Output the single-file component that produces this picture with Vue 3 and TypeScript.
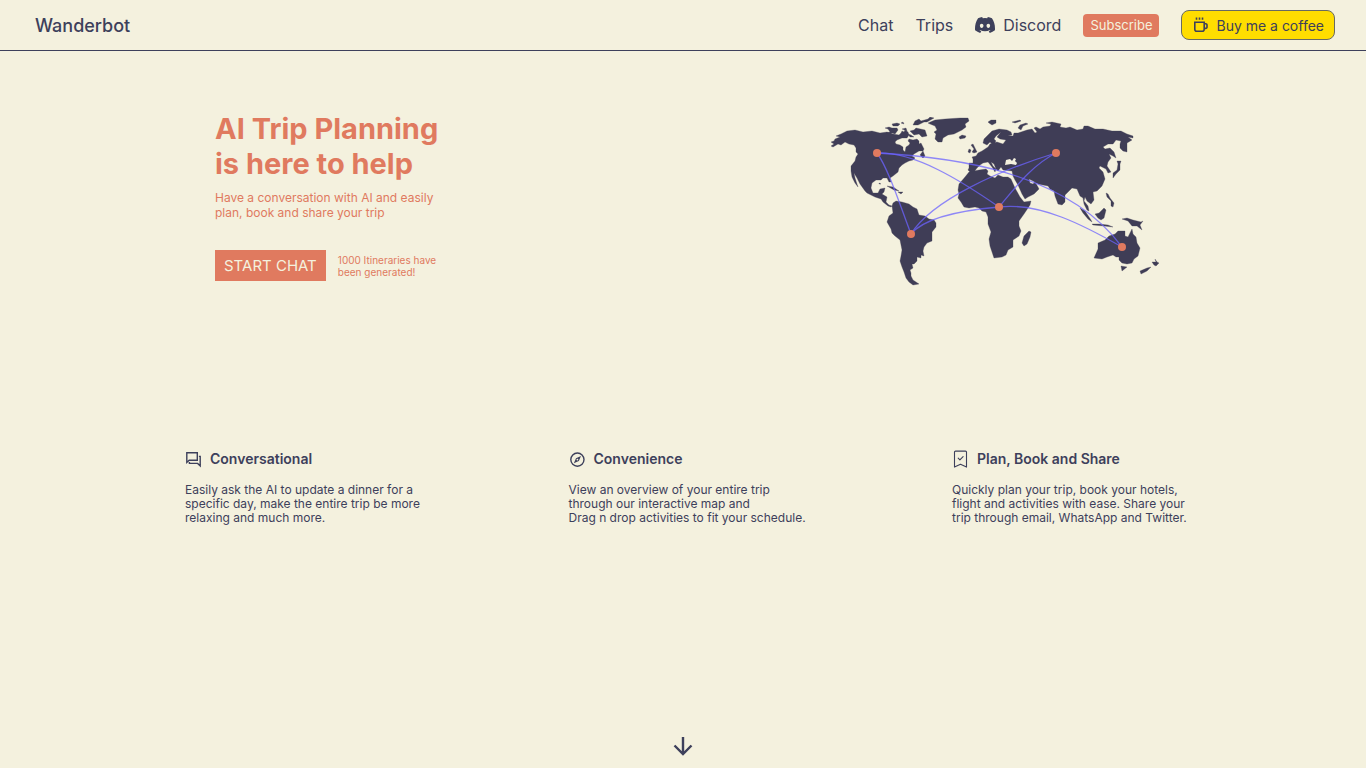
<script setup lang="ts">
interface Feature {
  icon: 'chat' | 'compass' | 'bookmark'
  title: string
  lines: string[]
}

const features: Feature[] = [
  {
    icon: 'chat',
    title: 'Conversational',
    lines: ['Easily ask the AI to update a dinner for a', 'specific day, make the entire trip be more', 'relaxing and much more.'],
  },
  {
    icon: 'compass',
    title: 'Convenience',
    lines: ['View an overview of your entire trip', 'through our interactive map and', 'Drag n drop activities to fit your schedule.'],
  },
  {
    icon: 'bookmark',
    title: 'Plan, Book and Share',
    lines: ['Quickly plan your trip, book your hotels,', 'flight and activities with ease. Share your', 'trip through email, WhatsApp and Twitter.'],
  },
]

const land: string[] = [
  // North and Central America
  'M831 146L834 144L831 142L834 141L835 139L840 137L836 136L841 134L847 131L855 130L863 132L872 131L880 133L887 132L893 134L899 135L901 133L902 131L904 132L905 130L908 132L909 135L907 138L902 138L897 140L895 142L896 144L900 145L903 147L903 150L905 152L906 147L909 145L910 143L908 141L909 139L913 140L917 139L919 141L919 144L921 143L924 149L923 151L919 151L914 154L912 156L915 158L913 160L909 161L905 163L902 165L899 168L898 172L893 176L890 178L891 182L889 182L887 178L883 178L881 180L876 180L872 183L871 188L873 193L878 193L880 189L885 188L884 192L882 194L887 197L886 202L889 205L892 206L891 207L888 206L883 202L881 199L875 197L867 193L865 191L860 184L857 178L854 173L855 178L858 187L855 183L852 177L851 171L851 166L855 161L856 157L858 154L856 152L856 148L854 145L849 144L845 142L841 145L838 144L833 147Z',
  // Arctic islands and Newfoundland
  'M889 135L886 133L890 132L888 129L885 128L889 127L892 128L897 128L898 130L895 134L892 133ZM892 124L897 123L900 124L898 126L893 126ZM901 123L903 122L904 124ZM902 129L906 128L907 131ZM915 121L919 119L921 121L928 119L930 117L934 118L927 122L924 122L918 125L913 125ZM910 131L914 130L916 128L925 130L927 136L922 137L919 134L914 135ZM908 134L911 135L914 137L910 137ZM920 155L923 151L925 156L923 158Z',
  // Caribbean
  'M887 186L893 187L899 191L894 190ZM898 192L903 192L901 194ZM879 183L881 184L879 184Z',
  // Greenland and Iceland
  'M928 123L935 120L945 119L960 118L968 118L969 121L965 124L966 127L962 130L954 134L948 135L943 138L942 142L938 142L935 139L936 134L934 132L937 130L935 126L930 124ZM959 137L962 135L966 136L965 138L960 139Z',
  // South America
  'M892 206L893 203L896 201L902 202L909 204L913 207L917 209L919 215L925 216L929 219L934 220L936 223L936 227L932 232L932 241L927 243L924 247L923 251L924 256L921 255L921 258L917 257L917 261L914 264L912 264L913 268L910 270L911 273L911 276L913 280L919 284L913 285L909 282L906 278L904 272L902 267L900 261L901 256L902 250L900 240L895 236L892 233L891 229L887 222L889 216L893 213Z',
  // Africa and Madagascar
  'M969 172L979 170L986 169L988 171L987 174L990 176L995 178L998 175L1003 177L1008 177L1011 179L1015 188L1020 197L1024 202L1031 201L1030 205L1024 214L1019 221L1019 226L1021 231L1019 236L1013 240L1013 247L1008 250L1006 255L1002 257L994 258L992 252L990 246L989 239L991 232L988 224L988 217L986 212L982 211L979 208L975 207L969 208L964 207L961 202L958 198L959 194L958 190L959 184L965 177Z',
  'M1029 231L1031 232L1030 237L1027 244L1024 246L1022 243L1024 236Z',
  // Eurasia
  'M968 170L969 168L969 163L973 163L973 159L972 157L976 156L978 153L982 151L988 147L990 144L993 143L997 142L1003 144L1006 140L1000 139L997 137L1001 132L996 136L994 139L996 141L993 145L990 142L987 145L983 143L984 139L988 135L992 131L999 129L1007 130L1011 132L1012 135L1008 136L1013 136L1014 133L1018 133L1027 130L1032 129L1035 133L1037 132L1034 128L1036 127L1040 129L1043 127L1050 126L1051 124L1046 123L1052 122L1061 124L1060 127L1066 128L1070 127L1077 130L1083 129L1084 126L1088 126L1095 129L1103 129L1112 131L1121 131L1127 134L1133 136L1133 138L1128 137L1132 140L1127 143L1127 148L1127 152L1123 151L1120 148L1120 144L1121 141L1116 140L1113 144L1108 144L1103 147L1105 149L1110 148L1114 152L1116 158L1113 156L1109 154L1111 158L1108 162L1107 166L1111 172L1108 173L1106 169L1100 166L1099 168L1103 172L1105 179L1102 186L1097 191L1093 192L1094 200L1091 204L1087 201L1085 197L1084 201L1088 206L1089 211L1087 210L1084 204L1083 198L1080 196L1077 189L1072 188L1065 195L1065 202L1062 205L1058 204L1055 196L1054 191L1050 189L1048 186L1038 184L1033 181L1029 179L1030 183L1033 184L1035 182L1038 187L1039 189L1034 194L1028 197L1025 199L1022 194L1018 185L1015 180L1013 176L1012 171L1003 170L1001 167L998 171L996 169L994 164L991 162L993 166L996 169L995 172L992 167L988 162L983 163L980 165L977 168L974 172L970 172Z',
  // British Isles, Svalbard and northern islands
  'M970 153L968 152L969 149L971 150ZM971 145L973 144L975 148L977 152L974 153L972 152L974 149ZM988 122L991 120L996 120L996 123L992 125L989 123ZM1012 122L1020 120L1021 121L1015 123ZM1018 128L1020 125L1026 123L1028 124L1023 126L1021 130Z',
  // Japan, Taiwan and Philippines
  'M1117 161L1121 161L1120 164L1120 170L1116 174L1113 178L1113 173L1117 170L1118 164ZM1106 193L1108 194L1110 198L1114 203L1113 207L1111 206L1111 201L1107 197Z',
  // Indonesia and New Guinea
  'M1080 208L1085 211L1091 220L1092 222L1088 219L1083 213ZM1095 214L1099 213L1104 208L1106 210L1104 218L1101 220L1098 218ZM1092 224L1099 224L1108 225L1113 227L1104 226L1093 225ZM1122 219L1127 218L1133 220L1141 222L1143 221L1140 225L1142 230L1137 226L1132 226L1128 221Z',
  // Australia, Tasmania and New Zealand
  'M1094 258L1098 249L1098 243L1105 240L1109 236L1115 234L1118 231L1125 231L1125 236L1128 237L1132 229L1133 234L1136 237L1137 243L1140 248L1138 256L1134 259L1132 263L1127 264L1122 263L1119 260L1119 257L1116 257L1113 255L1107 257L1102 259ZM1121 266L1127 267L1122 271ZM1140 271L1147 268L1151 267L1147 271L1141 274ZM1152 262L1156 262L1155 259L1157 262L1159 263L1156 266L1154 265Z',
]

// Black Sea
const water: string[] = [
  'M1005 165L1006 160L1010 159L1012 161L1014 158L1016 159L1015 161L1017 163L1016 165L1011 164Z',
]

const routes: string[] = [
  'M877 153C888 168 900 205 911 234',
  'M877 153C915 152 960 180 999 207',
  'M877 153C950 157 1065 170 1122 247',
  'M911 234C932 200 1000 170 1056 153',
  'M911 234C925 217 965 210 999 207',
  'M999 207C1015 188 1032 165 1056 153',
  'M999 207C1040 202 1085 226 1122 247',
]

const stops: [number, number][] = [[877, 153], [911, 234], [999, 207], [1056, 153], [1122, 247]]
</script>

<template>
  <div class="page">
    <header class="bar">
      <a class="brand" href="#">Wanderbot</a>
      <nav class="nav">
        <a href="#chat">Chat</a>
        <a href="#trips">Trips</a>
        <a class="discord" href="#discord">
          <svg width="20" height="16" viewBox="0 0 127.14 96.36" preserveAspectRatio="none" fill="currentColor" aria-hidden="true">
            <path d="M107.7 8.07A105.15 105.15 0 0 0 81.47 0a72.06 72.06 0 0 0-3.36 6.83 97.68 97.68 0 0 0-29.11 0A72.37 72.37 0 0 0 45.64 0a105.89 105.89 0 0 0-26.25 8.09C2.79 32.65-1.71 56.6.54 80.21a105.73 105.73 0 0 0 32.17 16.15 77.7 77.7 0 0 0 6.89-11.11 68.42 68.42 0 0 1-10.85-5.18c.91-.66 1.8-1.34 2.66-2a75.57 75.57 0 0 0 64.32 0c.87.71 1.76 1.39 2.66 2a68.68 68.68 0 0 1-10.87 5.19 77 77 0 0 0 6.89 11.1 105.25 105.25 0 0 0 32.19-16.14c2.64-27.38-4.51-51.11-18.9-72.15ZM42.45 65.69C36.18 65.69 31 60 31 53s5-12.74 11.43-12.74S54 46 53.89 53s-5.05 12.69-11.44 12.69Zm42.24 0C78.41 65.69 73.25 60 73.25 53s5-12.74 11.44-12.74S96.23 46 96.12 53s-5.04 12.69-11.43 12.69Z" />
          </svg>
          Discord
        </a>
        <button class="subscribe" type="button">Subscribe</button>
        <a class="coffee" href="#coffee">
          <svg width="18" height="18" viewBox="0 0 18 18" fill="none" stroke="currentColor" stroke-width="1.6" aria-hidden="true">
            <path d="M2.8 6.3h9.4v7a2 2 0 0 1-2 2H4.8a2 2 0 0 1-2-2ZM12.2 7.8h1.6a1.2 1.2 0 0 1 1.2 1.2v2.2a1.2 1.2 0 0 1-1.2 1.2h-1.6M4.5 1.6v2.2M7.5 1.6v2.2M10.5 1.6v2.2" />
          </svg>
          Buy me a coffee
        </a>
      </nav>
    </header>

    <main class="content">
      <section class="hero">
        <div class="pitch">
          <h1>AI Trip Planning<br />is here to help</h1>
          <p class="lead">Have a conversation with AI and easily<br />plan, book and share your trip</p>
          <div class="action">
            <button class="start" type="button">START CHAT</button>
            <p>1000 Itineraries have<br />been generated!</p>
          </div>
        </div>
        <svg class="map" width="330" height="170" viewBox="830 117 330 170" role="img" aria-label="World map with travel routes">
          <path v-for="d in land" :key="d" class="land" :d="d" />
          <path v-for="d in water" :key="d" class="water" :d="d" />
          <path v-for="d in routes" :key="d" class="route" :d="d" />
          <circle v-for="[x, y] in stops" :key="x" class="stop" :cx="x" :cy="y" r="4" />
        </svg>
      </section>

      <section class="features">
        <article v-for="f in features" :key="f.title" class="feature">
          <h2>
            <svg v-if="f.icon === 'chat'" width="17" height="18" viewBox="0 0 17 18" fill="none" stroke="currentColor" stroke-width="1.4" aria-hidden="true">
              <path d="M1.8 2.8h10.5v7.4H4.2l-2.4 2.2ZM4.4 12v1.4h8.2l2.6 2.4V6.4h-1.3" />
            </svg>
            <svg v-else-if="f.icon === 'compass'" width="17" height="18" viewBox="0 0 17 18" fill="none" stroke="currentColor" stroke-width="1.4" aria-hidden="true">
              <circle cx="8.4" cy="9.6" r="6.6" />
              <path d="M12 6L9.8 11L4.8 13.2L7 8.2Z" fill="currentColor" stroke="none" />
              <circle cx="8.4" cy="9.6" r="0.9" class="hub" />
            </svg>
            <svg v-else width="17" height="18" viewBox="0 0 17 18" fill="none" stroke="currentColor" stroke-width="1.1" stroke-linejoin="round" stroke-linecap="round" aria-hidden="true">
              <path d="M2.5 2.1a1 1 0 0 1 1-1h10a1 1 0 0 1 1 1v15l-6-2.8-6 2.8ZM6.2 8.2l1.7 1.7 3.2-3.3" />
            </svg>
            {{ f.title }}
          </h2>
          <p><template v-for="(line, i) in f.lines" :key="line"><br v-if="i > 0" />{{ line }}</template></p>
        </article>
      </section>
    </main>

    <a class="down" href="#more" aria-label="Scroll down">
      <svg width="24" height="24" viewBox="0 0 24 24" fill="none" stroke="currentColor" stroke-width="2.4" aria-hidden="true">
        <path d="M12 3v16.500M3.500 11.500L12 20l8.500-8.500" />
      </svg>
    </a>
  </div>
</template>

<style>
body {
  margin: 0;
  background: #f4f1de;
}
</style>

<style scoped>
.page {
  display: flex;
  flex-direction: column;
  min-height: 100vh;
  background: #f4f1de;
  color: #3d405b;
  font-family: Inter, "Liberation Sans", sans-serif;
}
h1, h2, p { margin: 0; }
a { color: inherit; text-decoration: none; }
button { border: 0; font-family: inherit; cursor: pointer; }
svg { flex: none; display: block; }

.bar {
  display: flex;
  align-items: center;
  justify-content: space-between;
  height: 50px;
  padding: 0 31px 0 35px;
  border-bottom: 1px solid #3d405b;
}
.brand { font-size: 18px; font-weight: 500; }
.nav { display: flex; align-items: center; gap: 22px; font-size: 16px; }
.discord { display: flex; align-items: center; gap: 8px; }
.subscribe {
  height: 23px;
  padding: 0 7px;
  border-radius: 4px;
  background: #e07a5f;
  color: #f4f1de;
  font-size: 13px;
}
.coffee {
  display: flex;
  align-items: center;
  gap: 6px;
  box-sizing: border-box;
  height: 30px;
  padding: 0 10px;
  border: 1px solid #696a62;
  border-radius: 8px;
  background: #ffdd00;
  font-size: 14px;
}

.content { flex: 1; padding: 0 185px; }
.hero {
  display: flex;
  justify-content: space-between;
  align-items: flex-start;
  padding: 60px 21px 0 30px;
}
h1 { color: #e07a5f; font-size: 29px; font-weight: 700; line-height: 35px; }
.lead { margin-top: 9px; color: #e07a5f; font-size: 12px; line-height: 15px; }
.action { display: flex; align-items: center; gap: 12px; margin-top: 30px; color: #e07a5f; font-size: 10px; line-height: 12px; }
.start { height: 31px; padding: 0 9px; background: #e07a5f; color: #f4f1de; font-size: 15px; }
.map { margin-top: 6px; }
.land { fill: #3f3d56; stroke: #3f3d56; stroke-width: 0.3; stroke-linejoin: round; }
.water { fill: #f4f1de; }
.route { fill: none; stroke: #6c63ff; stroke-width: 1.3; opacity: 0.75; }
.stop { fill: #e07a5f; }

.features { display: flex; justify-content: space-between; margin-top: 163px; }
.feature { width: 229px; white-space: nowrap; }
.feature h2 { display: flex; align-items: center; gap: 8px; font-size: 14px; font-weight: 600; line-height: 18px; }
.feature p { margin-top: 15px; font-size: 12px; line-height: 14px; }
.hub { fill: #f4f1de; stroke: none; }

.down { align-self: center; margin-bottom: 10px; }
</style>
